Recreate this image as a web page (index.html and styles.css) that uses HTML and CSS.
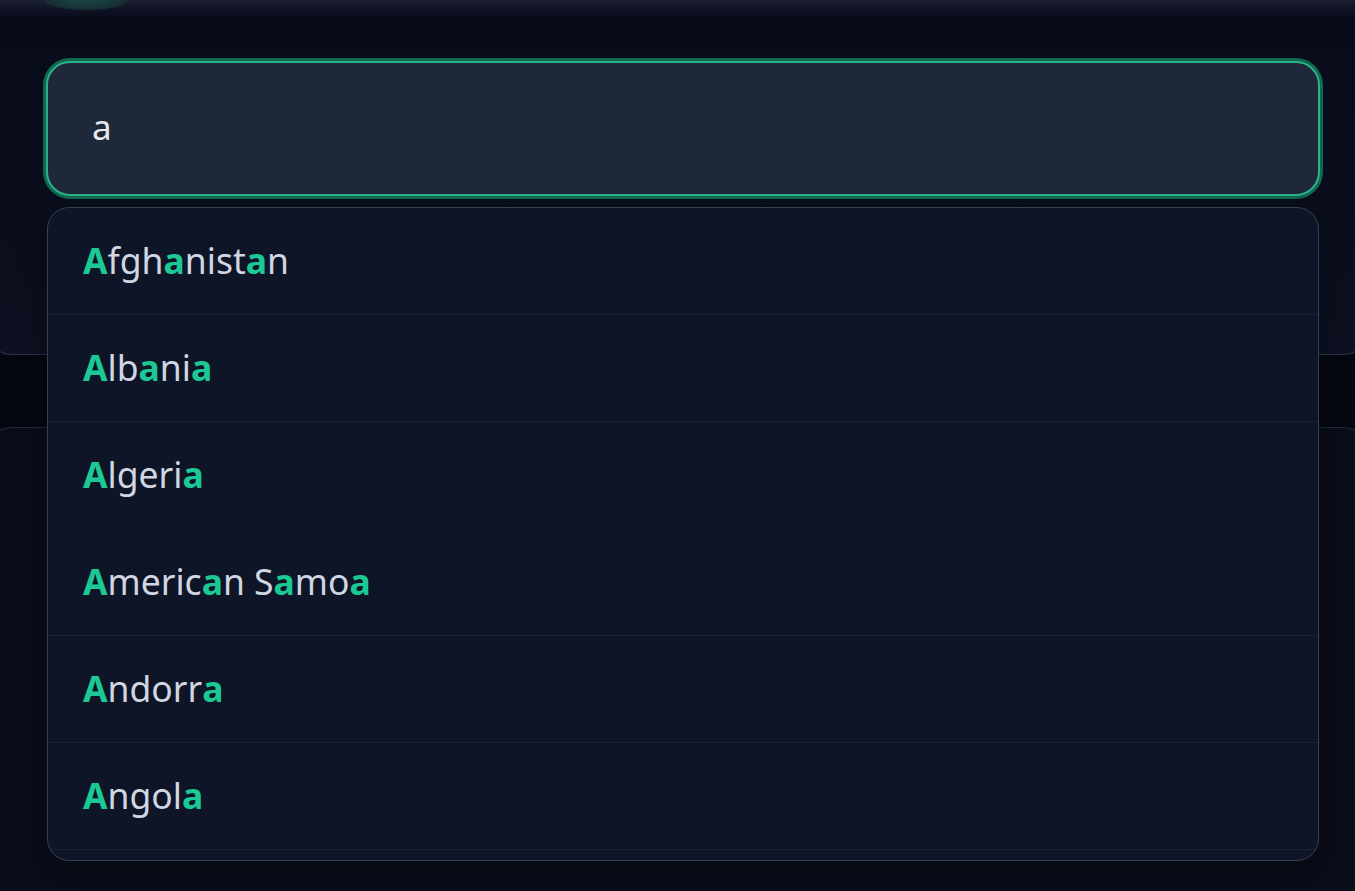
FILE: index.html
```html
<!DOCTYPE html>
<html lang="en">
<head>
<meta charset="utf-8">
<title>Country search</title>
<link rel="stylesheet" href="styles.css">
</head>
<body>
  <header class="topbar">
    <div class="topbar-pill"></div>
  </header>
  <main class="stage">
    <section class="panel panel-top"></section>
    <div class="panel-gap"></div>
    <section class="panel panel-bottom"></section>

    <div class="combobox">
      <div class="search-input">a</div>
      <ul class="suggestions">
        <li class="option"><b>A</b>fgh<b>a</b>nist<b>a</b>n</li>
        <li class="option"><b>A</b>lb<b>a</b>ni<b>a</b></li>
        <li class="option option-active"><b>A</b>lgeri<b>a</b></li>
        <li class="option"><b>A</b>meric<b>a</b>n S<b>a</b>mo<b>a</b></li>
        <li class="option"><b>A</b>ndorr<b>a</b></li>
        <li class="option"><b>A</b>ngol<b>a</b></li>
      </ul>
    </div>
  </main>
</body>
</html>
```

FILE: styles.css
```css
* { box-sizing: border-box; }

html, body {
  margin: 0;
  padding: 0;
  height: 100%;
  overflow: hidden;
}

body {
  background: #080c1a;
  font-family: "Noto Sans", "Open Sans", "Liberation Sans", sans-serif;
  color: #d3d9e4;
}

.topbar {
  height: 16px;
  padding-left: 44px;
  background: linear-gradient(to bottom, #1b1e30 0%, #0f1324 60%, #0a0e1c 100%);
  display: flex;
  align-items: flex-start;
}

.topbar-pill {
  width: 84px;
  height: 10px;
  border-radius: 0 0 42px 42px / 0 0 10px 10px;
  background: radial-gradient(ellipse at 50% 0%, #1c4544 0%, #173438 55%, rgba(20, 40, 48, 0) 100%);
}

.stage {
  position: relative;
  height: calc(100% - 16px);
}

.panel {
  margin: 0 -14px;
}

.panel-top {
  height: 339px;
  background: linear-gradient(to bottom, #080c1a 0%, #0a0e1c 60%, #0c1020 100%);
  border: 1px solid #2b3446;
  border-top: 0;
  border-radius: 0 0 26px 26px;
}

.panel-gap {
  height: 72px;
  background: #04070f;
}

.panel-bottom {
  height: 500px;
  background: #0a0d1a;
  border: 1px solid #222a3b;
  border-bottom: 0;
  border-radius: 26px 26px 0 0;
}

.combobox {
  position: absolute;
  top: 45px;
  left: 46px;
  width: 1274px;
}

.search-input {
  height: 135px;
  border: 2px solid #2cb088;
  border-radius: 24px;
  box-shadow: 0 0 0 3px #10684f;
  background: #1e2839;
  color: #e3e8f0;
  font-size: 35px;
  padding-left: 44px;
  display: flex;
  align-items: center;
  padding-bottom: 4px;
}

.suggestions {
  list-style: none;
  margin: 11px 1px 0;
  padding: 0;
  height: 654px;
  overflow: hidden;
  background: #0e1527;
  border: 1px solid #344055;
  border-radius: 22px;
  box-shadow: 0 12px 30px rgba(0, 0, 0, 0.35);
}

.option {
  height: 107px;
  padding-left: 35px;
  padding-bottom: 3px;
  display: flex;
  align-items: center;
  font-size: 35.5px;
  color: #d0d6e2;
  border-bottom: 1px solid #1a2335;
}

.option-active {
  border-bottom-color: #0e1527;
}

.option b {
  color: #1cc994;
  font-weight: 700;
}
```
